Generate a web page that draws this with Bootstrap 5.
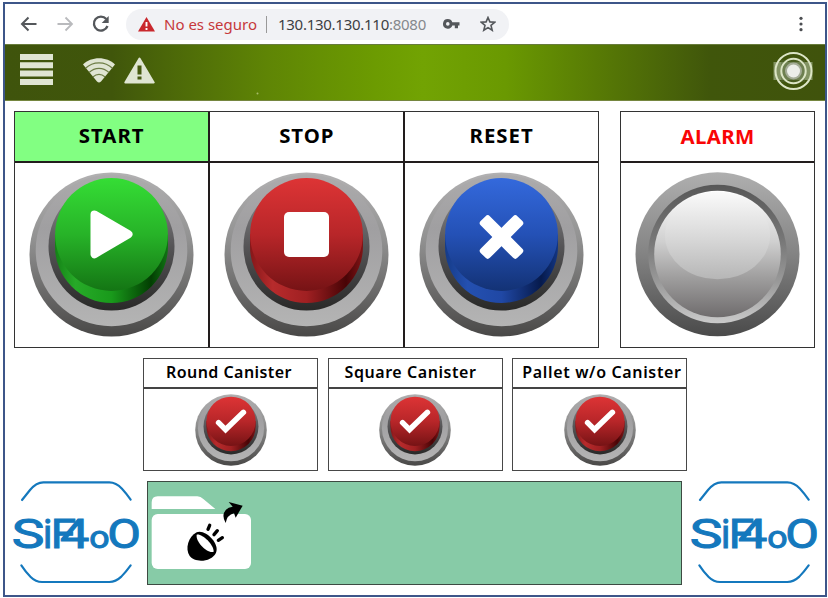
<!DOCTYPE html>
<html lang="es">
<head>
<meta charset="utf-8">
<meta name="viewport" content="width=device-width, initial-scale=1">
<title>SiF4oO</title>
<link href="https://cdn.jsdelivr.net/npm/bootstrap@5.3.0/dist/css/bootstrap.min.css" rel="stylesheet">
<style>
body{background:#fff;font-family:"Noto Sans","Open Sans",sans-serif;overflow:hidden}
svg{display:block;flex:none}
.hmi-frame{width:824px;height:595px;margin:2px 0 0 3px;border:2px solid #3d5689;color:#000}
.browser-bar{height:40px;padding:0 22px 0 14px}
.address{width:383px;height:31px;background:#f1f2f5;border-radius:16px;margin-left:16px;padding-left:12px;font-size:15px}
.insecure{color:#c6383b;margin-left:9px;white-space:nowrap;width:93px}
.url-sep{width:1px;height:17px;background:#999;margin:0 11px 0 9px}
.url{color:#3c3f43;white-space:nowrap;width:150px;letter-spacing:-.27px}
.url span{color:#85888c}
.green-bar{height:57px;padding:7px 11px 0 15px;background:linear-gradient(90deg,#3f540c 0,#40560b 13%,#5f8505 32%,#6c9b01 45%,#72a303 51%,#6a9901 61%,#587b05 72%,#40560b 86%,#40530c 100%);border-top:1px solid #687c3c;border-bottom:1px solid #75863f}
.main-row{margin:10px 0 0 9px;height:237px;gap:21px}
.panel{border:1px solid #333}
.panel .cell+.cell{border-left:2px solid #221d1d}
.cell-title{height:51px;border-bottom:2px solid #221d1d;font-weight:700;font-size:20.4px;letter-spacing:1px;line-height:47px}
.is-on{background:#82ff82}
.is-alarm{color:#f90505;line-height:49px;letter-spacing:.4px}
.push{padding-top:9px}
.canisters{margin:10px 0 0 138px;gap:9.5px}
.canister{width:175px;height:113px;border:1px solid #484848}
.canister-title{height:30px;border-bottom:2px solid #444;font-size:16px;font-weight:600;line-height:26px;white-space:nowrap;letter-spacing:.45px}
.canister svg{margin-top:5px}
.shift-round{padding-right:3px}
.shift-square{padding-right:9px;letter-spacing:.55px}
.shift-pallet{padding-left:5px;letter-spacing:.65px}
.foot{margin:9px 0 0 7px}
.tray{width:535px;height:104px;background:#87cba7;border:1px solid #3d4a42;margin:1px 8px 0 7px}
.logo-text{font-family:"Roboto","Inter",sans-serif;fill:#1478bd;stroke:#1478bd;stroke-width:3}
</style>
<script src="https://cdn.jsdelivr.net/npm/bootstrap@5.3.0/dist/js/bootstrap.bundle.min.js"></script>
</head>
<body>
<svg width="0" height="0" class="position-absolute" aria-hidden="true">
<defs>
<linearGradient id="rim" x2="0" y2="1"><stop stop-color="#b2b1b2"/><stop offset=".4" stop-color="#929292"/><stop offset="1" stop-color="#494847"/></linearGradient>
<linearGradient id="ring" x2="0" y2="1"><stop stop-color="#acabac"/><stop offset=".35" stop-color="#a09fa1"/><stop offset="1" stop-color="#b4b4b4"/></linearGradient>
<linearGradient id="well" x2="0" y2="1"><stop stop-color="#909092"/><stop offset=".5" stop-color="#555456"/><stop offset="1" stop-color="#292928"/></linearGradient>
<linearGradient id="gTop" x2="0" y2="1"><stop stop-color="#35dd35"/><stop offset=".5" stop-color="#27b328"/><stop offset="1" stop-color="#147514"/></linearGradient>
<linearGradient id="gSide"><stop stop-color="#148216"/><stop offset=".18" stop-color="#27aa28"/><stop offset=".5" stop-color="#199a1b"/><stop offset=".85" stop-color="#023e02"/><stop offset="1" stop-color="#117514"/></linearGradient>
<linearGradient id="rTop" x2="0" y2="1"><stop stop-color="#dd3435"/><stop offset=".5" stop-color="#b82629"/><stop offset="1" stop-color="#761315"/></linearGradient>
<linearGradient id="rSide"><stop stop-color="#861719"/><stop offset=".2" stop-color="#b72b2c"/><stop offset=".5" stop-color="#a02022"/><stop offset=".85" stop-color="#480406"/><stop offset="1" stop-color="#801416"/></linearGradient>
<linearGradient id="bTop" x2="0" y2="1"><stop stop-color="#3469dc"/><stop offset=".5" stop-color="#2451b6"/><stop offset="1" stop-color="#133275"/></linearGradient>
<linearGradient id="bSide"><stop stop-color="#153b88"/><stop offset=".2" stop-color="#2450b0"/><stop offset=".5" stop-color="#2048a5"/><stop offset=".85" stop-color="#061a4c"/><stop offset="1" stop-color="#133684"/></linearGradient>
<linearGradient id="aRim" x2="0" y2="1"><stop stop-color="#afafaf"/><stop offset=".5" stop-color="#838383"/><stop offset="1" stop-color="#4a4a4a"/></linearGradient>
<linearGradient id="aBevel" x2="0" y2="1"><stop stop-color="#575757"/><stop offset=".4" stop-color="#777"/><stop offset=".7" stop-color="#999"/><stop offset="1" stop-color="#cacaca"/></linearGradient>
<linearGradient id="aDisc" x2="0" y2="1"><stop stop-color="#fff"/><stop offset=".4" stop-color="#d0d0d0"/><stop offset=".68" stop-color="#a09f9f"/><stop offset="1" stop-color="#6f6c6d"/></linearGradient>
<linearGradient id="aShine" x2="0" y2="1"><stop stop-color="#fafafa"/><stop offset=".5" stop-color="#dadada"/><stop offset="1" stop-color="#b6b6b6"/></linearGradient>
<symbol id="base" viewBox="0 0 165 165"><circle cx="82.5" cy="82.5" r="82" fill="url(#rim)"/><circle cx="82.5" cy="78.4" r="75.8" fill="url(#ring)"/><ellipse cx="82.5" cy="74.5" rx="63" ry="64" fill="url(#well)"/></symbol>
<symbol id="redBtn" viewBox="0 0 165 165"><use href="#base"/><path d="M26 62V74.5a56.5 56.5 0 0 0 113 0V62z" fill="url(#rSide)"/><circle cx="82.5" cy="62.5" r="56.4" fill="url(#rTop)"/></symbol>
<symbol id="checkBtn" viewBox="0 0 165 165"><use href="#redBtn"/><path d="M54 65.500L70 81.500L111 42" fill="none" stroke="#fff" stroke-width="12.500" stroke-linecap="round"/></symbol>
<symbol id="logo" viewBox="36 30 384 316">
<g fill="none" stroke="#1478bd" stroke-width="6.500" stroke-linecap="round"><path d="M66 90L90 60Q109 37 130 37H328Q348 37 366 56Q379 70 392 89"/><path d="M64 286Q77 306 92 321Q107 336 126 336H328Q347 336 364 320Q379 304 392 286"/></g>
<g class="logo-text" font-size="124"><text x="35" y="233" textLength="98" lengthAdjust="spacingAndGlyphs">S</text><text x="129" y="233" textLength="28" lengthAdjust="spacingAndGlyphs">i</text><text x="152" y="233" textLength="76" lengthAdjust="spacingAndGlyphs">F</text><text x="180" y="233" textLength="88" lengthAdjust="spacingAndGlyphs">4</text><text x="268" y="233" font-size="94" textLength="61" lengthAdjust="spacingAndGlyphs">o</text><text x="322" y="233" textLength="101" lengthAdjust="spacingAndGlyphs">O</text></g>
</symbol>
</defs>
</svg>

<main class="hmi-frame">
<div class="browser-bar d-flex align-items-center">
<svg width="19" height="16" viewBox="0 0 19 16" fill="none" stroke="#54575b" stroke-width="2"><path d="M17.500 8H3M9.500 1.500L3 8l6.500 6.500"/></svg>
<svg width="19" height="16" viewBox="0 0 19 16" fill="none" stroke="#b9babd" stroke-width="1.800" style="margin-left:18px"><path d="M1.500 8H16M9.500 1.500L16 8l-6.500 6.500"/></svg>
<svg width="18" height="18" viewBox="0 0 18 18" style="margin-left:17px"><path d="M14.300 4.100A7 7 0 1 0 15.500 11" fill="none" stroke="#54575b" stroke-width="2.300"/><path d="M16.700 1V8H9.700z" fill="#54575b"/></svg>
<div class="address d-flex align-items-center">
<svg width="17" height="15" viewBox="0 0 17 15"><path d="M8.500 0L17 14.500H0z" fill="#c9282d"/><path d="M8.500 5v4.500M8.500 11v2" stroke="#fff" stroke-width="1.900"/></svg>
<span class="insecure">No es seguro</span><span class="url-sep"></span><span class="url">130.130.130.110<span>:8080</span></span>
<svg width="17" height="10" viewBox="0 0 17 10" style="margin-left:15px"><path fill="#54575b" fill-rule="evenodd" d="M4.800 0a4.800 4.800 0 0 1 4.500 3.300H16.500V6.500H15V9.300H11.800V6.500H9.300A4.800 4.800 0 1 1 4.800 0zm0 3.100a1.800 1.800 0 1 0 0 3.600 1.800 1.800 0 0 0 0-3.600z"/></svg>
<svg width="16" height="16" viewBox="0 0 16 16" style="margin-left:20px"><path d="M8 1.500L9.900 5.900 14.700 6.300 11 9.400 12.200 14.200 8 11.600 3.800 14.200 5 9.400 1.300 6.300 6.100 5.900z" fill="none" stroke="#54575b" stroke-width="1.600"/></svg>
</div>
<svg class="ms-auto" width="4" height="16" viewBox="0 0 4 16" fill="#4c4e52"><circle cx="2" cy="2.300" r="1.600"/><circle cx="2" cy="8" r="1.600"/><circle cx="2" cy="13.700" r="1.600"/></svg>
</div>

<div class="green-bar d-flex align-items-start">
<svg width="33" height="33" viewBox="0 0 33 33" fill="#dfe5d2" style="margin-top:1px"><path d="M0 1h33v6H0zM0 9.300h33v6H0zM0 17.600h33v6H0zM0 26h33v6H0z"/></svg>
<svg width="32" height="28" viewBox="0 0 32 28" style="margin:5px 0 0 30px"><path d="M0 7.500C8-.8 24-.8 32 7.500L18 24.500Q16 26.500 14 24.500z" fill="#dfe5d2"/><path d="M2.500 11.200C10 4 22 4 29.500 11.200M6 15.500C12 10 20 10 26 15.500M9.800 20C14 16.500 18 16.500 22.200 20" fill="none" stroke="#6d7d45" stroke-width="1.200"/></svg>
<svg width="31" height="28" viewBox="0 0 31 28" style="margin:5px 0 0 9px"><path d="M15.500 1.500L29.700 25.500H1.300z" fill="#dfe5d2" stroke="#dfe5d2" stroke-width="2" stroke-linejoin="round"/><path d="M15.500 8.500v9M15.500 19.500v3" stroke="#45590f" stroke-width="4"/></svg>
<svg width="3" height="3" viewBox="0 0 3 3" style="margin:40px 0 0 101px"><circle cx="1.500" cy="1.500" r="1" fill="#a7bd6a"/></svg>
<svg class="ms-auto" width="42" height="38" viewBox="0 0 42 38"><path d="M1.500 10h39v18h-39z" fill="#829362"/><path d="M9 8h24v22H9z" fill="#55683a" opacity=".45"/><g fill="none" stroke="#dce5c5" stroke-width="2"><circle cx="21.500" cy="19" r="18"/><circle cx="21.500" cy="19" r="12.200"/></g><circle cx="21.500" cy="19" r="8.500" fill="#a5ad98"/><circle cx="21.500" cy="19" r="6.500" fill="#eceee9"/></svg>
</div>

<div class="main-row d-flex">
<section class="panel d-flex text-center" style="width:585px">
<div class="cell flex-fill w-100"><div class="cell-title is-on">START</div><div class="push d-flex justify-content-center">
<svg width="165" height="165" viewBox="0 0 165 165"><use href="#base"/><path d="M26 62V74.500a56.500 56.500 0 0 0 113 0V62z" fill="url(#gSide)"/><circle cx="82.500" cy="62.500" r="56.400" fill="url(#gTop)"/><path d="M65.500 42.500L99.500 62.300L65.500 82.200z" fill="#fff" stroke="#fff" stroke-width="8" stroke-linejoin="round"/></svg></div></div>
<div class="cell flex-fill w-100"><div class="cell-title">STOP</div><div class="push d-flex justify-content-center">
<svg width="165" height="165" viewBox="0 0 165 165"><use href="#redBtn"/><rect x="60" y="40" width="45" height="45" rx="5" fill="#fff"/></svg></div></div>
<div class="cell flex-fill w-100"><div class="cell-title">RESET</div><div class="push d-flex justify-content-center">
<svg width="165" height="165" viewBox="0 0 165 165"><use href="#base"/><path d="M26 62V74.500a56.500 56.500 0 0 0 113 0V62z" fill="url(#bSide)"/><circle cx="82.500" cy="62.500" r="56.400" fill="url(#bTop)"/><g fill="#fff" transform="translate(82.500 65)"><rect x="-26" y="-6.500" width="52" height="13" rx="3" transform="rotate(45)"/><rect x="-26" y="-6.500" width="52" height="13" rx="3" transform="rotate(-45)"/></g></svg></div></div>
</section>
<section class="panel text-center" style="width:195px"><div class="cell"><div class="cell-title is-alarm">ALARM</div><div class="push d-flex justify-content-center">
<svg width="165" height="165" viewBox="0 0 165 165"><circle cx="82.500" cy="82.300" r="82" fill="url(#aRim)"/><circle cx="82.500" cy="82" r="69.300" fill="url(#aBevel)"/><circle cx="82.500" cy="82" r="63.300" fill="url(#aDisc)"/><ellipse cx="82.500" cy="63.500" rx="52.500" ry="43.800" fill="url(#aShine)"/></svg></div></div></section>
</div>

<div class="canisters d-flex text-center">
<section class="canister"><div class="canister-title shift-round">Round Canister</div><svg class="mx-auto" width="72" height="72" viewBox="0 0 165 165"><use href="#checkBtn"/></svg></section>
<section class="canister"><div class="canister-title shift-square">Square Canister</div><svg class="mx-auto" width="72" height="72" viewBox="0 0 165 165"><use href="#checkBtn"/></svg></section>
<section class="canister"><div class="canister-title shift-pallet">Pallet w/o Canister</div><svg class="mx-auto" width="72" height="72" viewBox="0 0 165 165"><use href="#checkBtn"/></svg></section>
</div>

<div class="foot d-flex align-items-start">
<svg width="128" height="105.300" viewBox="36 30 384 316"><use href="#logo" x="36" y="30" width="384" height="316"/></svg>
<div class="tray"><svg width="106.700" height="100" viewBox="444 36 320 300">
<path d="M455 117V97Q455 79 473 79H592Q602 79 610 87L646 117z" fill="#fff"/><rect x="455" y="132" width="298" height="165" rx="18" fill="#fff"/>
<path d="M686 96L728 107L707 143L702 130Q681 135 677 159Q667 142 672 128Q680 111 698 110z"/>
<path d="M590 187C565 199 554 237 569 258C584 279 634 277 648 248C660 218 613 176 590 187z"/><path d="M590 194C605 190 641 222 641 245C622 252 586 215 590 194z" fill="#fff"/>
<path d="M624 178l5-12M642 194l10-12M655 211l12-8" fill="none" stroke="#000" stroke-width="10" stroke-linecap="round"/></svg></div>
<svg width="128" height="105.300" viewBox="36 30 384 316"><use href="#logo" x="36" y="30" width="384" height="316"/></svg>
</div>
</main>
</body>
</html>
